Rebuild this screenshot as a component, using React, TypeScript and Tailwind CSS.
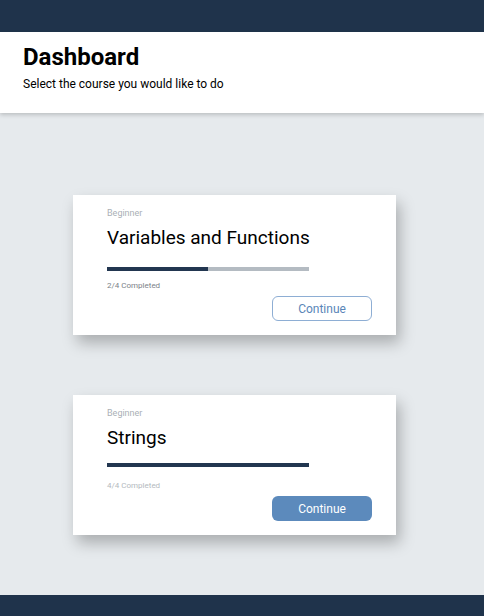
import React from "react";

type Course = {
  level: string;
  title: string;
  done: number;
  total: number;
  finished?: boolean;
};

const courses: Course[] = [
  { level: "Beginner", title: "Variables and Functions", done: 2, total: 4 },
  { level: "Beginner", title: "Strings", done: 4, total: 4, finished: true },
];

function CourseCard({ course }: { course: Course }) {
  const pct = (course.done / course.total) * 100;
  return (
    <div className="w-[323px] h-[140px] bg-white shadow-[4px_8px_14px_rgba(0,0,0,0.26)] pl-[34px] pr-[24px] pt-[12px] flex flex-col">
      <div className="text-[9px] leading-[12px] text-[#aab0b6]">{course.level}</div>
      <div className="mt-[7px] text-[19px] leading-[24px] text-black">{course.title}</div>
      <div className={`${course.finished ? "mt-[13px]" : "mt-[17px]"} w-[202px] h-[4px] bg-[#b4bbc2]`}>
        <div className="h-full bg-[#223650]" style={{ width: `${pct}%` }} />
      </div>
      <div className={`${course.finished ? "mt-[13px] text-[#b4b9be]" : "mt-[9px] text-[#7b8188]"} text-[8px] leading-[12px]`}>
        {course.done}/{course.total} Completed
      </div>
      <div className="mt-[4px] flex justify-end">
        {course.finished ? (
          <button className="w-[100px] h-[25px] rounded-[6px] bg-[#5c8abc] text-white text-[12px]">
            Continue
          </button>
        ) : (
          <button className="w-[100px] h-[25px] rounded-[6px] border border-[#8eaed4] bg-white text-[#5a86b8] text-[12px]">
            Continue
          </button>
        )}
      </div>
    </div>
  );
}

export default function App() {
  return (
    <div className="w-[484px] h-[616px] flex flex-col bg-[#e6eaed] overflow-hidden" style={{ fontFamily: "Roboto, 'Noto Sans', sans-serif" }}>
      <div className="h-[32px] bg-[#1f334b] shrink-0" />
      <header className="h-[81px] bg-white shrink-0 shadow-[0_2px_4px_rgba(0,0,0,0.18)] px-[23px] pt-[11px] relative z-10">
        <h1 className="text-[24px] leading-[29px] font-bold text-black">Dashboard</h1>
        <p className="mt-[4px] text-[12px] leading-[16px] text-black">Select the course you would like to do</p>
      </header>
      <main className="flex-1 flex flex-col items-start pl-[73px] pt-[82px] gap-[60px]">
        {courses.map((c) => (
          <CourseCard key={c.title} course={c} />
        ))}
      </main>
      <footer className="h-[21px] bg-[#1f334b] shrink-0" />
    </div>
  );
}
